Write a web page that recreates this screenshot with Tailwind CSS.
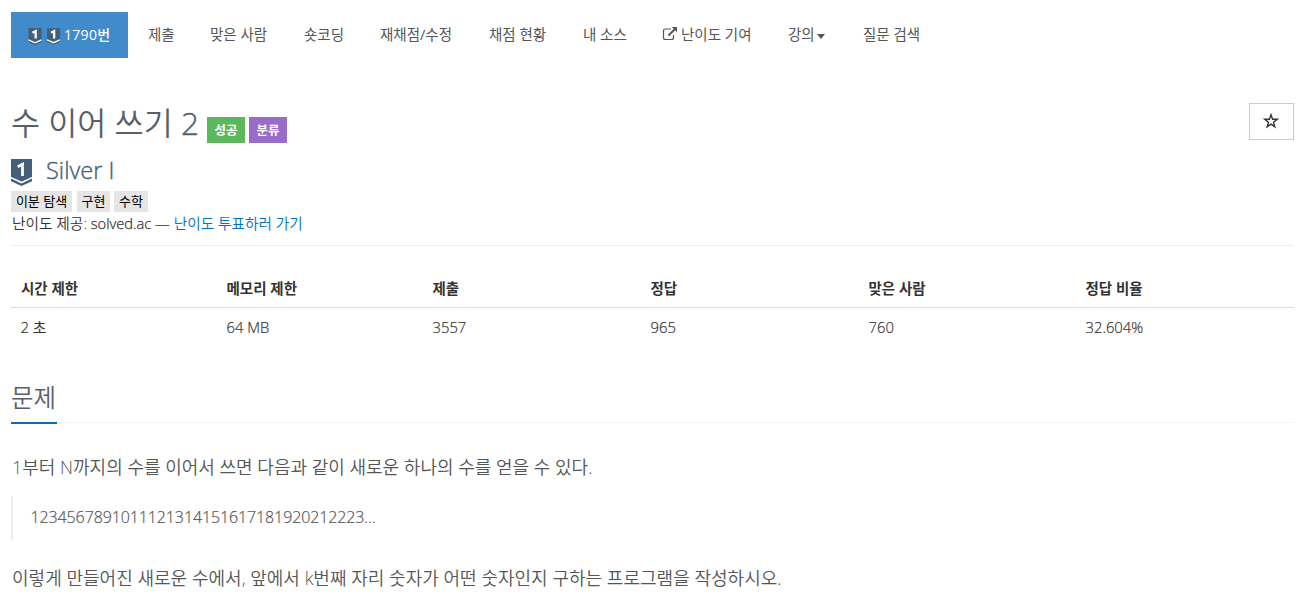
<!DOCTYPE html>
<html lang="ko">
<head>
  <meta charset="UTF-8" />
  <meta name="viewport" content="width=device-width, initial-scale=1.0"/>
  <title>1790번: 수 이어 쓰기 2</title>
  <script src="https://cdn.jsdelivr.net/npm/@tailwindcss/browser@4"></script>
</head>
<body class="bg-white text-[#333] text-sm leading-5 overflow-hidden font-['Open_Sans','Noto_Sans_CJK_KR',sans-serif]">

  <!-- Tier badge -->
  <svg class="hidden">
    <symbol id="tier" viewBox="0 0 21 27">
      <path fill="#435f7a" d="M0 0h21v18.5L10.5 23 0 18.5z"/>
      <path fill="none" stroke="#fff" stroke-width="1.3" d="M0 18.6l10.5 4.8L21 18.6"/>
      <path fill="#435f7a" d="M0 19.6l10.5 4.8L21 19.6v2.6L10.5 27 0 22.2z"/>
      <path fill="none" stroke="#fff" stroke-width="2.8" d="M6.7 7.7l4.8-2.5v11.9"/>
    </symbol>
    <symbol id="tier-small" viewBox="0 0 14 18">
      <path fill="#435f7a" d="M0 0h14v12.5L7 15.5 0 12.5z"/>
      <path fill="#435f7a" d="M0 13.5l7 3 7-3v1.5l-7 3-7-3z"/>
      <path fill="none" stroke="#fff" stroke-width="1.5" d="M0 12.6l7 3.1 7-3.1"/>
      <path fill="none" stroke="#fff" stroke-width="2.4" d="M4.3 5l3.4-1.8v8"/>
    </symbol>
  </svg>

  <div class="ml-[11px] mr-5 pt-3">
    <!-- Menu -->
    <ul class="flex h-[46px] text-[#555] text-[14.5px] whitespace-nowrap leading-[46px]">
      <li class="w-[117px] mr-0.5 pl-[17px] bg-[#428bca] text-white text-sm leading-[45px] font-medium flex">
        <svg class="w-3.5 h-[17px] mr-[5px] mt-4"><use href="#tier-small"/></svg>
        <svg class="w-[13px] h-[17px] mr-1 mt-4"><use href="#tier-small"/></svg>
        <span class="tracking-[0.3px]">1790번</span>
      </li>
      <li class="w-[62px] pl-[18px]">제출</li>
      <li class="w-[94px] pl-[18px]">맞은 사람</li>
      <li class="w-[76px] pl-[18px]">숏코딩</li>
      <li class="w-[109px] pl-[18px]">재채점/수정</li>
      <li class="w-[94px] pl-[18px]">채점 현황</li>
      <li class="w-[79px] pl-[18px]">내 소스</li>
      <li class="w-[126px] pl-[18px] flex">
        <svg class="w-4 h-[14px] mr-[3px] mt-[15px]" viewBox="0 0 15 14" fill="none" stroke="#555">
          <path stroke-width="1.2" d="M8.5 2H3Q1 2 1 4v6.5q0 2 2 2h6q2 0 2-2V8"/>
          <path stroke-width="2" d="M6 8.5L12 2.5"/>
          <path fill="#555" stroke="none" d="M9.3 0H14.5v5.2z"/>
        </svg>
        <span>난이도 기여</span>
      </li>
      <li class="w-[75px] pl-[18px] flex">
        <span>강의</span>
        <i class="h-0 ml-0.5 mt-[22px] border-x-[4.5px] border-t-[5px] border-x-transparent border-t-[#555]"></i>
      </li>
      <li class="pl-[18px]">질문 검색</li>
    </ul>

    <!-- Title -->
    <div class="flex justify-between pt-[45px] h-[99px]">
      <div class="flex items-start">
        <h1 class="text-[31.6px] leading-10 font-[350] text-[#585f69] whitespace-nowrap w-[196px]">수 이어 쓰기 <span class="[-webkit-text-stroke:0.4px]">2</span></h1>
        <span class="mt-3.5 w-[38px] h-[26px] bg-[#5cb85c] text-white text-[12.5px] leading-[27px] font-bold text-center">성공</span>
        <span class="mt-3.5 ml-1 w-[38px] h-[26px] bg-[#9b6bcc] text-white text-[12.5px] leading-[27px] font-bold text-center">분류</span>
      </div>
      <button class="w-[45px] h-[37px] pr-0.5 pb-0.5 border border-[#ccc] flex items-center justify-center">
        <svg class="w-4 h-4" viewBox="0 0 16 16" fill="none" stroke="#333" stroke-width="1.4">
          <path d="M8 1.8l1.6 4.5h4.5l-3.6 2.9 1.3 4.5L8 11.1l-3.8 2.6 1.3-4.5-3.6-2.9h4.5z"/>
        </svg>
      </button>
    </div>

    <!-- Tier and tags -->
    <div class="flex h-[34px] pt-0.5">
      <svg class="w-[21px] h-[27px]"><use href="#tier"/></svg>
      <span class="ml-3.5 text-[23.5px] leading-[22px] font-light text-[#435f7a] [-webkit-text-stroke:0.35px]">Silver I</span>
    </div>
    <div class="flex text-[13px] leading-[21px] text-black text-center">
      <span class="w-[61px] bg-[#e5e5e5]">이분 탐색</span>
      <span class="ml-[5px] w-[33px] bg-[#e5e5e5]">구현</span>
      <span class="ml-1 w-[34px] bg-[#e5e5e5]">수학</span>
    </div>
    <p class="h-[34px] pt-px pl-px border-b border-[#eee] text-[14.7px] font-[350] whitespace-nowrap">난이도 제공: <span class="[-webkit-text-stroke:0.25px]">solved.ac —</span> <a class="text-[#0072bc]">난이도 투표하러 가기</a></p>

    <!-- Limits -->
    <table class="mt-[22px] w-full table-fixed text-left">
      <thead>
        <tr class="h-[39px] border-b border-[#ddd] text-[14.5px]">
          <th class="w-[206px] pl-2.5 pt-1">시간 제한</th>
          <th class="w-[206px] pl-[9.5px] pt-1">메모리 제한</th>
          <th class="w-[218px] pl-[9.5px] pt-1">제출</th>
          <th class="w-[218px] pl-[9.5px] pt-1">정답</th>
          <th class="w-[217px] pl-[9.5px] pt-1">맞은 사람</th>
          <th class="pl-[9.5px] pt-1">정답 비율</th>
        </tr>
      </thead>
      <tbody>
        <tr class="h-[39px] text-[14.8px] font-[350] [-webkit-text-stroke:0.2px]">
          <td class="pl-[9.5px]">2 초</td>
          <td class="pl-[9.5px]">64 MB</td>
          <td class="pl-[9.5px]">3557</td>
          <td class="pl-[9.5px]">965</td>
          <td class="pl-[9.5px]">760</td>
          <td class="pl-[9.5px]">32.604%</td>
        </tr>
      </tbody>
    </table>

    <!-- Problem -->
    <div class="mt-[34px] h-[43px] flex border-b border-dotted border-[#e4e9f0]">
      <h2 class="h-11 text-[24.5px] leading-9 font-[350] text-[#585f69] border-b-2 border-[#0072bc] w-[46px] whitespace-nowrap">문제</h2>
    </div>
    <div class="text-lg leading-7 font-[350] text-[#555] whitespace-nowrap">
      <p class="mt-[30px] pl-px">1부터 N까지의 수를 이어서 쓰면 다음과 같이 새로운 하나의 수를 얻을 수 있다.</p>
      <blockquote class="mt-[15px] h-11 pl-[17.5px] border-l-2 border-[#eee] text-base leading-[42px] tracking-[-0.11px] [-webkit-text-stroke:0.2px]">1234567891011121314151617181920212223...</blockquote>
      <p class="mt-6 pl-px tracking-[0.02px]">이렇게 만들어진 새로운 수에서, 앞에서 k번째 자리 숫자가 어떤 숫자인지 구하는 프로그램을 작성하시오.</p>
    </div>
  </div>

</body>
</html>
